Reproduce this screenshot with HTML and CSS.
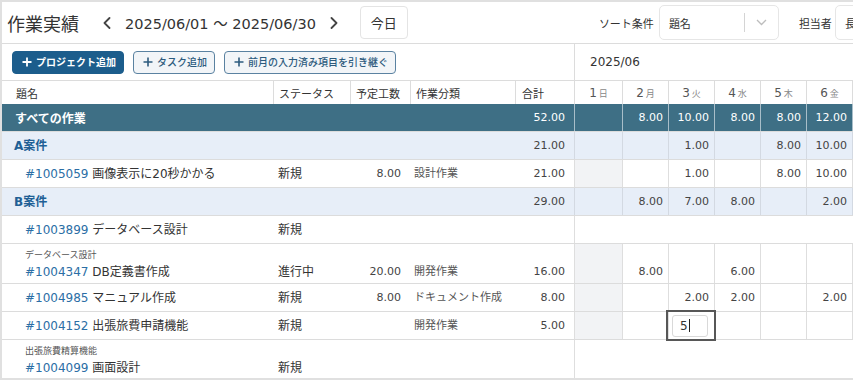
FILE: index.html
```html
<!DOCTYPE html>
<html lang="ja">
<head>
<meta charset="utf-8">
<title>作業実績</title>
<link rel="stylesheet" href="styles.css">
</head>
<body>
<div class="page">
  <header class="topbar">
    <h1 class="pagetitle">作業実績</h1>
    <button class="nav prev" aria-label="前へ"><svg width="8" height="12" viewBox="0 0 8 12"><polyline points="6.5,1 1.5,6 6.5,11" fill="none" stroke="#444" stroke-width="1.8" stroke-linecap="round" stroke-linejoin="round"/></svg></button>
    <span class="range">2025/06/01 ～ 2025/06/30</span>
    <button class="nav next" aria-label="次へ"><svg width="8" height="12" viewBox="0 0 8 12"><polyline points="1.5,1 6.5,6 1.5,11" fill="none" stroke="#444" stroke-width="1.8" stroke-linecap="round" stroke-linejoin="round"/></svg></button>
    <button class="today">今日</button>
    <div class="filters">
      <span class="flabel">ソート条件</span>
      <div class="select sort"><span>題名</span><i class="sep"></i><svg width="11" height="7" viewBox="0 0 11 7"><polyline points="1,1 5.5,5.5 10,1" fill="none" stroke="#bdbdbd" stroke-width="1.3"/></svg></div>
      <span class="flabel who">担当者</span>
      <div class="select person"><span>長</span></div>
    </div>
  </header>

  <div class="row toolbar">
    <div class="tools">
      <button class="btn primary"><svg width="10" height="10" viewBox="0 0 10 10"><path d="M5 0.5v9M0.5 5h9" stroke="currentColor" stroke-width="1.8"/></svg>プロジェクト追加</button>
      <button class="btn ghost"><svg width="10" height="10" viewBox="0 0 10 10"><path d="M5 0.5v9M0.5 5h9" stroke="currentColor" stroke-width="1.6"/></svg>タスク追加</button>
      <button class="btn ghost"><svg width="10" height="10" viewBox="0 0 10 10"><path d="M5 0.5v9M0.5 5h9" stroke="currentColor" stroke-width="1.6"/></svg>前月の入力済み項目を引き継ぐ</button>
    </div>
    <div class="month">2025/06</div>
  </div>

  <div class="row head">
    <div class="c h-title">題名</div>
    <div class="c bl">ステータス</div>
    <div class="c bl">予定工数</div>
    <div class="c bl">作業分類</div>
    <div class="c bl h-total">合計</div>
    <div class="c d dh"><b>1</b><small>日</small></div>
    <div class="c d dh"><b>2</b><small>月</small></div>
    <div class="c d dh"><b>3</b><small>火</small></div>
    <div class="c d dh"><b>4</b><small>水</small></div>
    <div class="c d dh"><b>5</b><small>木</small></div>
    <div class="c d dh"><b>6</b><small>金</small></div>
    <div class="c d dh"></div>
  </div>

  <div class="row all">
    <div class="c title">すべての作業</div>
    <div class="c"></div><div class="c"></div><div class="c"></div>
    <div class="c total num">52.00</div>
    <div class="c d num"></div>
    <div class="c d num">8.00</div>
    <div class="c d num">10.00</div>
    <div class="c d num">8.00</div>
    <div class="c d num">8.00</div>
    <div class="c d num">12.00</div>
    <div class="c d num"></div>
  </div>

  <div class="row proj">
    <div class="c title">A案件</div>
    <div class="c"></div><div class="c"></div><div class="c"></div>
    <div class="c total num">21.00</div>
    <div class="c d num"></div>
    <div class="c d num"></div>
    <div class="c d num">1.00</div>
    <div class="c d num"></div>
    <div class="c d num">8.00</div>
    <div class="c d num">10.00</div>
    <div class="c d num"></div>
  </div>

  <div class="row task">
    <div class="c title"><span class="id">#1005059</span>&nbsp;画像表示に20秒かかる</div>
    <div class="c status">新規</div>
    <div class="c plan num">8.00</div>
    <div class="c cat">設計作業</div>
    <div class="c total num">21.00</div>
    <div class="c d sun"></div>
    <div class="c d num"></div>
    <div class="c d num">1.00</div>
    <div class="c d num"></div>
    <div class="c d num">8.00</div>
    <div class="c d num">10.00</div>
    <div class="c d num"></div>
  </div>

  <div class="row proj">
    <div class="c title">B案件</div>
    <div class="c"></div><div class="c"></div><div class="c"></div>
    <div class="c total num">29.00</div>
    <div class="c d num"></div>
    <div class="c d num">8.00</div>
    <div class="c d num">7.00</div>
    <div class="c d num">8.00</div>
    <div class="c d num"></div>
    <div class="c d num">2.00</div>
    <div class="c d num"></div>
  </div>

  <div class="row task">
    <div class="c title"><span class="id">#1003899</span>&nbsp;データベース設計</div>
    <div class="c status">新規</div>
    <div class="c plan num"></div>
    <div class="c cat"></div>
    <div class="c total num"></div>
    <div class="c blank"></div>
  </div>

  <div class="row task tall">
    <div class="c title"><span class="sub">データベース設計</span><span class="main"><span class="id">#1004347</span>&nbsp;DB定義書作成</span></div>
    <div class="c status">進行中</div>
    <div class="c plan num">20.00</div>
    <div class="c cat">開発作業</div>
    <div class="c total num">16.00</div>
    <div class="c d sun"></div>
    <div class="c d num">8.00</div>
    <div class="c d num"></div>
    <div class="c d num">6.00</div>
    <div class="c d num"></div>
    <div class="c d num"></div>
    <div class="c d num"></div>
  </div>

  <div class="row task">
    <div class="c title"><span class="id">#1004985</span>&nbsp;マニュアル作成</div>
    <div class="c status">新規</div>
    <div class="c plan num">8.00</div>
    <div class="c cat">ドキュメント作成</div>
    <div class="c total num">8.00</div>
    <div class="c d sun"></div>
    <div class="c d num"></div>
    <div class="c d num">2.00</div>
    <div class="c d num">2.00</div>
    <div class="c d num"></div>
    <div class="c d num">2.00</div>
    <div class="c d num"></div>
  </div>

  <div class="row task">
    <div class="c title"><span class="id">#1004152</span>&nbsp;出張旅費申請機能</div>
    <div class="c status">新規</div>
    <div class="c plan num"></div>
    <div class="c cat">開発作業</div>
    <div class="c total num">5.00</div>
    <div class="c d sun"></div>
    <div class="c d num"></div>
    <div class="c d focus"><div class="inp">5<span class="caret"></span></div></div>
    <div class="c d num"></div>
    <div class="c d num"></div>
    <div class="c d num"></div>
    <div class="c d num"></div>
  </div>

  <div class="row task tall">
    <div class="c title"><span class="sub">出張旅費精算機能</span><span class="main"><span class="id">#1004099</span>&nbsp;画面設計</span></div>
    <div class="c status">新規</div>
    <div class="c plan num"></div>
    <div class="c cat"></div>
    <div class="c total num"></div>
    <div class="c blank"></div>
  </div>
</div>
</body>
</html>
```

FILE: styles.css
```css
html, body {
  margin: 0;
  padding: 0;
  background: #fff;
  overflow: hidden;
}
body {
  width: 853px;
  height: 381px;
  font-family: "DejaVu Sans", "Noto Sans CJK JP", sans-serif;
  color: #333;
}
.page {
  box-sizing: border-box;
  width: 853px;
  height: 380px;
  border: 2px solid #e0e0e0;
  border-right: 0;
  overflow: hidden;
}

/* ---------- top bar ---------- */
.topbar {
  display: flex;
  align-items: center;
  height: 42px;
  box-sizing: border-box;
  border-bottom: 1px solid #dcdcdc;
  white-space: nowrap;
}
.topbar > * { flex-shrink: 0; }
.pagetitle {
  margin: 0 0 0 5px;
  font-family: "Noto Sans CJK JP", sans-serif;
  font-size: 18px;
  font-weight: 400;
  line-height: 1;
  color: #333;
}
.nav {
  display: flex;
  align-items: center;
  border: 0;
  background: none;
  padding: 0;
}
.prev { margin-left: 24px; }
.next { margin-left: 14px; }
.range {
  margin-left: 14px;
  font-size: 14.5px;
  color: #333;
}
.today {
  margin-left: 22px;
  width: 48px;
  height: 33px;
  box-sizing: border-box;
  border: 1px solid #e4e4e4;
  border-radius: 4px;
  background: #fff;
  font-family: "Noto Sans CJK JP", sans-serif;
  font-size: 13px;
  color: #333;
  padding: 0;
}
.filters {
  display: flex;
  align-items: center;
  margin-left: 191px;
}
.flabel {
  font-family: "Noto Sans CJK JP", sans-serif;
  font-size: 11px;
  color: #333;
  flex-shrink: 0;
}
.who { margin-left: 20px; }
.select {
  display: flex;
  align-items: center;
  box-sizing: border-box;
  height: 35px;
  border: 1px solid #e6e6e6;
  border-radius: 5px;
  background: #fff;
  font-family: "Noto Sans CJK JP", sans-serif;
  font-size: 11px;
  color: #333;
  flex-shrink: 0;
}
.sort {
  width: 120px;
  margin-left: 5px;
  padding: 0 11px 0 9px;
}
.sort .sep {
  margin-left: auto;
  width: 1px;
  height: 19px;
  background: #d4d4d4;
}
.sort svg { margin-left: 11px; }
.person {
  width: 100px;
  margin-left: 3px;
  padding-left: 9px;
}

/* ---------- grid rows ---------- */
.row {
  display: grid;
  grid-template-columns: 271px 77px 60px 105px 59px 48px repeat(7, 46px);
  box-sizing: border-box;
  height: 28px;
  border-bottom: 1px solid #dcdcdc;
  width: max-content;
}
.c {
  box-sizing: border-box;
  display: flex;
  align-items: flex-end;
  padding-bottom: 5px;
  line-height: 16px;
  white-space: nowrap;
  overflow: hidden;
  min-width: 0;
}
.num {
  font-family: "DejaVu Sans", sans-serif;
  font-size: 11px;
  color: #444;
  justify-content: flex-end;
}
.d { border-left: 1px solid #dedede; padding-right: 5px; }

/* toolbar */
.toolbar { height: 37px; }
.tools {
  grid-column: 1 / 6;
  display: flex;
  align-items: center;
  gap: 9px;
  padding-left: 10px;
}
.btn {
  display: inline-flex;
  align-items: center;
  gap: 4px;
  height: 23px;
  box-sizing: border-box;
  padding: 0 7px 0 9px;
  border-radius: 4px;
  font-family: "Noto Sans CJK JP", sans-serif;
  font-size: 10px;
  line-height: 1;
  white-space: nowrap;
}
.primary {
  background: #1c5d8c;
  border: 1px solid #1c5d8c;
  color: #fff;
  font-weight: 700;
}
.ghost {
  background: #f2f5f8;
  border: 1px solid #5a82a1;
  color: #2d5b7e;
  font-weight: 500;
}
.month {
  grid-column: 6 / -1;
  border-left: 1px solid #dcdcdc;
  display: flex;
  align-items: center;
  padding-left: 15px;
  font-size: 12px;
  color: #333;
}

/* column header */
.head { height: 23px; border-bottom: 0; }
.head .c {
  align-items: center;
  padding: 0 0 0 5px;
  font-family: "Noto Sans CJK JP", sans-serif;
  font-size: 11px;
  color: #333;
}
.head .h-title { padding-left: 14px; }
.head .bl { border-left: 1px solid #dcdcdc; }
.head .h-total { padding-left: 6px; }
.head .dh {
  justify-content: center;
  padding: 0;
  gap: 2px;
  border-left: 1px solid #dcdcdc;
}
.dh b {
  font-family: "DejaVu Sans", sans-serif;
  font-weight: 400;
  font-size: 12px;
  color: #555;
}
.dh small {
  font-size: 9px;
  color: #888;
  padding-top: 2px;
}

/* summary row */
.all { background: #3e6f85; color: #fff; }
.all .title {
  padding-left: 13px;
  font-family: "Noto Sans CJK JP", sans-serif;
  font-weight: 700;
  font-size: 12px;
}
.all .num { color: #fff; }
.all .d { border-left-color: #a9bec9; }

/* project rows */
.proj { background: #e7eef8; }
.proj .title {
  padding-left: 12px;
  font-weight: 700;
  font-size: 12px;
  color: #215f95;
}
.proj .d { border-left-color: #d3d9e2; }

.total { padding-right: 9px; }
.plan { padding-right: 9px; }

/* task rows */
.task .title {
  padding-left: 23px;
  font-size: 12px;
  color: #333;
}
.id { color: #2b6ea5; }
.status { padding-left: 5px; font-size: 12px; color: #333; }
.cat { padding-left: 4px; font-size: 11px; color: #555; }
.sun { background: #f2f3f5; }
.blank {
  grid-column: 6 / -1;
  border-left: 1px solid #dedede;
}

/* tall rows with a parent label */
.tall { height: 40px; }
.tall .c { padding-bottom: 3px; }
.tall .title {
  flex-direction: column;
  justify-content: flex-end;
  align-items: flex-start;
}
.sub {
  font-size: 9px;
  line-height: 12px;
  color: #555;
  margin-bottom: 3px;
}
.main { display: flex; }

/* focused input cell */
.focus {
  position: relative;
  z-index: 1;
  outline: 2px solid #575757;
  outline-offset: 0;
  align-items: center;
  padding: 0 5px 0 3px;
  overflow: visible;
}
.inp {
  box-sizing: border-box;
  width: 36px;
  height: 22px;
  border: 1px solid #d9d9d9;
  border-radius: 3px;
  background: #fff;
  display: flex;
  align-items: center;
  padding-left: 7px;
  font-family: "DejaVu Sans", sans-serif;
  font-size: 12px;
  color: #333;
}
.caret {
  display: inline-block;
  width: 1px;
  height: 13px;
  background: #222;
  margin-left: 1px;
}
```
